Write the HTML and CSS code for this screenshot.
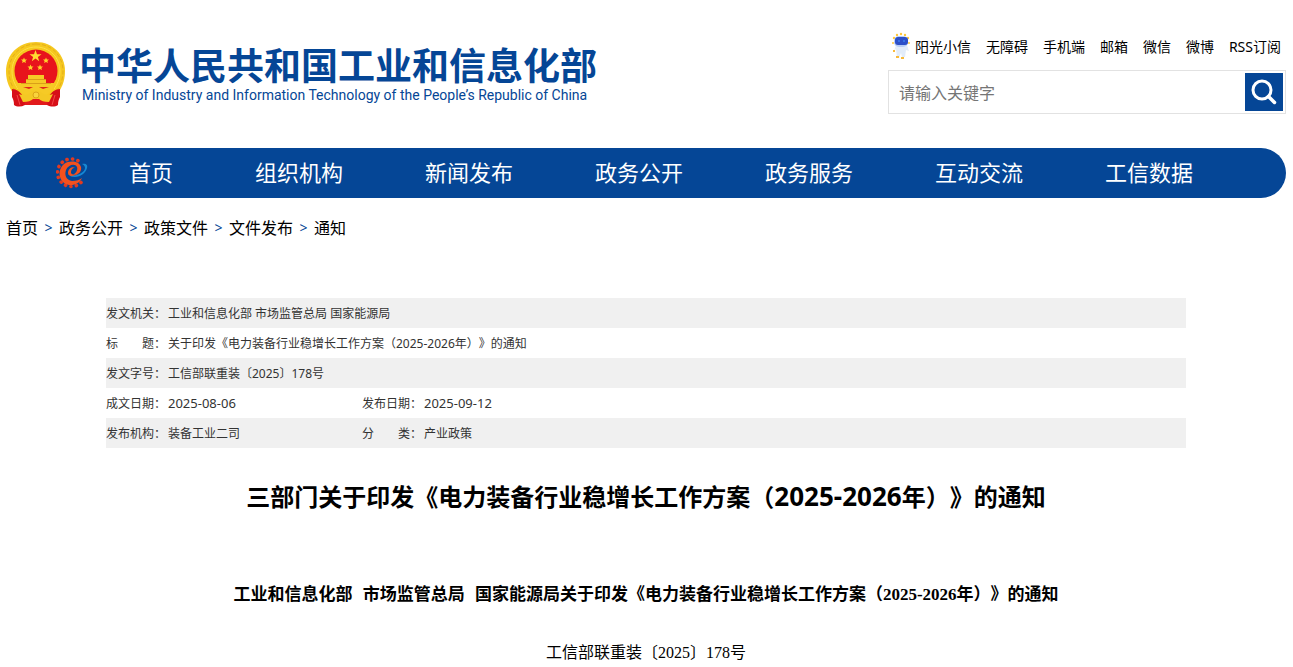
FILE: index.html
```html
<!DOCTYPE html>
<html lang="zh-CN">
<head>
<meta charset="utf-8">
<meta name="viewport" content="width=device-width, initial-scale=1">
<title>三部门关于印发《电力装备行业稳增长工作方案（2025-2026年）》的通知</title>
<link rel="stylesheet" href="styles.css">
</head>
<body>
<div class="container">
  <header class="header">
    <a class="brand" href="#">
      <svg class="emblem" viewBox="0 0 60 66" aria-hidden="true">
        <path d="M30 0C12 0 0 13 0 29c0 11 4 19 9 24h41c5-5 9-13 9-24C59 13 47 0 30 0z" fill="#f6c81e"/>
        <path d="M30 2C14 2 3 14 3 29c0 9 3 16 7 21M30 2c16 0 27 12 27 27 0 9-3 16-7 21" fill="none" stroke="#e3ae1c" stroke-width="1" stroke-dasharray="4 2"/>
        <path d="M30 5C16 5 6 16 6 29c0 8 3 14 6 18M30 5c14 0 24 11 24 24 0 8-3 14-6 18" fill="none" stroke="#ffdf45" stroke-width="1"/>
        <circle cx="30" cy="29" r="21.500" fill="#e8141c"/>
        <path d="M29.500 8l1.500 4.200h4.500l-3.600 2.700 1.300 4.300-3.700-2.600-3.700 2.600 1.300-4.300-3.600-2.700H28z" fill="#ffdc32"/>
        <g fill="#ffd22a">
          <path id="star" d="M18 15.500l.9 1.900 2.100.2-1.600 1.400.5 2.100-1.900-1.100-1.900 1.100.5-2.100-1.600-1.400 2.100-.2z"/>
          <use href="#star" x="22"/>
          <use href="#star" x="6.500" y="7"/>
          <use href="#star" x="16" y="7"/>
        </g>
        <path d="M22 33h16v4H22z" fill="#f6ca26"/>
        <path d="M20 37h20v4h9c-1 6-5 10-9 12H19c-4-2-8-6-9-12h10z" fill="#f6ca26"/>
        <path d="M20 37.500h20M15 41.500h30" stroke="#d9a018" stroke-width="1"/>
        <path d="M17 45h10l-4 2zM43 45H33l4 2z" fill="#e02a1a"/>
        <path d="M6 47c5 0 8 3 11 7 2 3 3 5 2 9-4 2-8 2-11 0 0-4-1-6-2-8zM54 47c-5 0-8 3-11 7-2 3-3 5-2 9 4 2 8 2 11 0 0-4 1-6 2-8z" fill="#d70f18"/>
        <path d="M17 56h26l-2 7H19z" fill="#e21a1c"/>
        <path d="M13 52c5 2 8 1 11-1 3-3 9-3 12 0 3 2 6 3 11 1l-4 8c-5 0-8-1-10-3h-6c-2 2-5 3-10 3z" fill="#f4c824"/>
        <circle cx="30" cy="53" r="3" fill="#f9d43c" stroke="#dba318" stroke-width="1"/>
        <path d="M11 53l3 10M49 53l-3 10" stroke="#f3484a" stroke-width="1"/>
      </svg>
      <span class="brand-text">
        <span class="brand-cn">中华人民共和国工业和信息化部</span>
        <span class="brand-en" lang="en">Ministry of Industry and Information Technology of the People’s Republic of China</span>
      </span>
    </a>
    <div class="tools">
      <nav class="quick" aria-label="快捷链接">
        <a class="robot-link" href="#"><svg class="robot" viewBox="0 0 20 28" aria-hidden="true">
            <g fill="#ffc83a"><circle cx="6" cy="3" r="1.200"/><circle cx="10" cy="2" r="1.200"/><circle cx="14" cy="3" r="1.200"/><circle cx="3" cy="6" r="1.200"/><circle cx="17" cy="6" r="1.200"/><circle cx="2" cy="11" r="1"/><circle cx="18" cy="11" r="1"/></g>
            <path d="M5 13h11l2 6-3-1-1 7h-3l-1-4-2 5H6l-1-9-2 2z" fill="#e2ecfa"/>
            <rect x="3" y="4" width="14" height="11" rx="5" fill="#b8cdf5"/>
            <rect x="4" y="5" width="13" height="8" rx="3" fill="#2c4fc8"/>
            <circle cx="8" cy="9" r="1" fill="#3a7cf0"/><circle cx="13" cy="9" r="1" fill="#3a7cf0"/>
            <path d="M5 24h3v2H5zM10 25h3v2h-3zM2 18h2v2H2z" fill="#f8b93a"/>
          </svg>阳光小信</a>
        <a href="#">无障碍</a>
        <a href="#">手机端</a>
        <a href="#">邮箱</a>
        <a href="#">微信</a>
        <a href="#">微博</a>
        <a href="#">RSS订阅</a>
      </nav>
      <form class="search">
        <input class="search-input" type="text" placeholder="请输入关键字" aria-label="请输入关键字">
        <button class="search-button" type="submit" aria-label="搜索">
          <svg class="search-icon" viewBox="0 0 38 38" aria-hidden="true"><circle cx="17" cy="17" r="9" fill="none" stroke="#fff" stroke-width="3"/><path d="M23.500 23.500l6 6" stroke="#fff" stroke-width="3.500" stroke-linecap="round"/></svg>
        </button>
      </form>
    </div>
  </header>

  <nav class="menu" aria-label="主导航">
    <svg class="menu-logo" viewBox="0 0 32 32" aria-hidden="true">
      <path d="M25 25.500A13.800 13.800 0 1 1 24 5" fill="none" stroke="#e23a20" stroke-width="3.600" stroke-linecap="round" stroke-dasharray="0.100 5.400"/>
      <path d="M26 21c-3 7-12 9-18 5C2 21 2 12 8 7c6-4 15-3 17 3 1 5-3 8-8 8 3-2 5-5 4-8-2-4-9-2-11 3-2 6 1 10 6 11 4 0 8-1 10-3z" fill="#f4511e"/>
      <path d="M12 16c0-4 4-7 7-5-3 0-4 2-4 5 1 2 4 2 7 1-4 3-10 3-10-1z" fill="#f4511e"/>
      <path d="M26 7c4-1 6 1 5 4-2 7-10 11-17 8 8 0 15-4 15-8 0-2-1-3-3-4z" fill="#1688d4"/>
    </svg>
    <a href="#">首页</a>
    <a href="#">组织机构</a>
    <a href="#">新闻发布</a>
    <a href="#">政务公开</a>
    <a href="#">政务服务</a>
    <a href="#">互动交流</a>
    <a href="#">工信数据</a>
  </nav>

  <nav class="crumbs" aria-label="当前位置">
    <a href="#">首页</a><span class="sep">&gt;</span><a href="#">政务公开</a><span class="sep">&gt;</span><a href="#">政策文件</a><span class="sep">&gt;</span><a href="#">文件发布</a><span class="sep">&gt;</span><a href="#">通知</a>
  </nav>

  <main class="article">
    <table class="meta">
      <colgroup><col class="col-label"><col class="col-value"><col class="col-label"><col></colgroup>
      <tr><th scope="row">发文机关：</th><td colspan="3">工业和信息化部 市场监管总局 国家能源局</td></tr>
      <tr><th scope="row">标　　题：</th><td colspan="3">关于印发《电力装备行业稳增长工作方案（2025-2026年）》的通知</td></tr>
      <tr><th scope="row">发文字号：</th><td colspan="3">工信部联重装〔2025〕178号</td></tr>
      <tr><th scope="row">成文日期：</th><td><span class="date">2025-08-06</span></td><th scope="row">发布日期：</th><td><span class="date">2025-09-12</span></td></tr>
      <tr><th scope="row">发布机构：</th><td>装备工业二司</td><th scope="row">分　　类：</th><td>产业政策</td></tr>
    </table>
    <h1 class="title">三部门关于印发《电力装备行业稳增长工作方案（<span class="title-num">2025-2026</span>年）》的通知</h1>
    <div class="content">
      <p class="subtitle"><span>工业和信息化部</span> <span class="issuer">市场监管总局</span> <span class="issuer">国家能源局关于印发《电力装备行业稳增长工作方案（2025-2026年）》的通知</span></p>
      <p class="doc-number">工信部联重装〔2025〕178号</p>
    </div>
  </main>
</div>
</body>
</html>
```
FILE: styles.css
```css
* {
  box-sizing: border-box;
}

body {
  margin: 0;
  padding-right: 1px;
  background: #fff;
  color: #000;
  font-family: "Noto Sans", "Noto Sans CJK SC", sans-serif;
  font-size: 16px;
  text-spacing-trim: space-all;
}

a {
  color: inherit;
  text-decoration: none;
}

.container {
  max-width: 1280px;
  margin: 0 auto;
}

.header {
  display: flex;
  justify-content: space-between;
  align-items: flex-start;
  padding-top: 33px;
  margin-bottom: 34px;
}

.brand {
  display: flex;
  gap: 13px;
  padding-top: 9px;
  color: #054696;
}

.emblem {
  width: 60px;
  height: 66px;
}

.brand-text {
  display: flex;
  flex-direction: column;
}

.brand-cn {
  font-family: "Noto Sans CJK SC", sans-serif;
  font-size: 37px;
  font-weight: 700;
  line-height: 44px;
}

.brand-en {
  padding-left: 3px;
  font-family: Roboto, sans-serif;
  font-size: 14px;
  line-height: 18px;
}

.tools {
  width: 398px;
}

.quick {
  display: flex;
  justify-content: flex-end;
  align-items: center;
  gap: 15px;
  height: 26px;
  margin-bottom: 11px;
  padding-right: 5px;
  font-size: 14px;
  white-space: nowrap;
}

.robot-link {
  display: flex;
  align-items: center;
  gap: 4px;
}

.robot {
  width: 20px;
  height: 28px;
}

.search {
  display: flex;
  align-items: center;
  height: 44px;
  padding: 2px;
  border: 1px solid #e2e2e2;
}

.search-input {
  flex: 1;
  min-width: 0;
  padding: 2px 8px 0;
  border: 0;
  outline: 0;
  font: inherit;
}

.search-input::placeholder {
  color: #757575;
}

.search-button {
  width: 38px;
  height: 38px;
  padding: 0;
  border: 0;
  background: #054696;
}

.search-icon {
  display: block;
}

.menu {
  display: flex;
  align-items: center;
  height: 50px;
  padding-left: 50px;
  border-radius: 25px;
  background: #054696;
  color: #fff;
  font-size: 22px;
  line-height: 32px;
  white-space: nowrap;
}

.menu-logo {
  width: 32px;
  height: 32px;
}

.menu a {
  padding: 0 41px 2px;
}

.crumbs {
  display: flex;
  padding-top: 18px;
  line-height: 24px;
}

.sep {
  width: 21px;
  color: #054696;
  font-size: 14px;
  text-align: center;
}

.article {
  padding: 58px 100px 0;
}

.meta {
  width: 100%;
  border-collapse: collapse;
  table-layout: fixed;
  color: #333;
  font-size: 12px;
  line-height: 18px;
}

.meta tr:nth-child(odd) {
  background: #f0f0f0;
}

.meta th,
.meta td {
  height: 30px;
  padding: 2px 0 0;
  font-weight: 400;
  text-align: left;
  white-space: nowrap;
}

.col-label {
  width: 62px;
}

.col-value {
  width: 194px;
}

.date {
  display: block;
  padding-bottom: 2px;
  font-size: 13px;
  line-height: 18px;
}

.title {
  margin: 30px 0 0;
  font-size: 24px;
  font-weight: 700;
  line-height: 36px;
  text-align: center;
}

.title-num {
  font-size: 26px;
}

.content {
  padding-top: 66px;
  font-family: "Liberation Serif", "Noto Sans CJK SC", serif;
  text-align: center;
}

.subtitle {
  margin: 0 0 30px;
  font-size: 17px;
  font-weight: 700;
  line-height: 28px;
}

.issuer {
  margin-left: 6px;
}

.doc-number {
  margin: 0;
  line-height: 28px;
}
```
